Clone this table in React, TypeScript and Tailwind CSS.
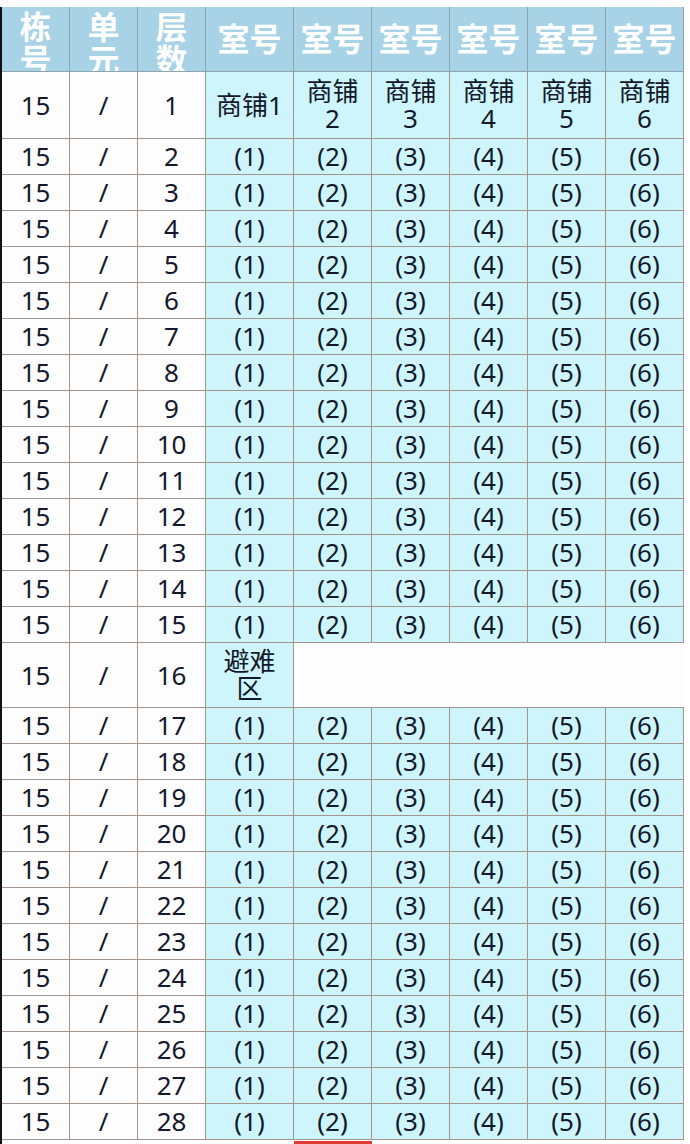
import React from 'react';

const COLS = 'grid-cols-[68px_68px_68px_88px_78px_78px_78px_78px_78px]';
const floors = Array.from({ length: 27 }, (_, i) => i + 2);

const Cell: React.FC<{ cyan?: boolean; className?: string; children?: React.ReactNode }> = ({ cyan, className = '', children }) => (
  <div
    className={`flex items-center justify-center text-center border-r border-b border-[#a3958b] ${
      cyan ? 'bg-[#cdf5fb]' : 'bg-[#fdfdfd]'
    } ${className}`}
  >
    {children}
  </div>
);

const Head: React.FC<{ vertical?: boolean; children: React.ReactNode }> = ({ vertical, children }) => (
  <div
    className={`flex justify-center overflow-hidden border-r border-b border-[#8fa3ad] bg-[#a8d2e6] text-white font-bold ${
      vertical ? 'items-start pt-[3px] leading-[33px] text-[32px]' : 'items-center text-[32px] leading-none'
    }`}
  >
    {vertical ? (
      <div className="flex flex-col items-center">
        {String(children).split('').map((c, i) => (
          <span key={i} className="block h-[33px]">
            {c}
          </span>
        ))}
      </div>
    ) : (
      children
    )}
  </div>
);

export default function App() {
  return (
    <div
      className="w-[690px] h-[1144px] bg-white pt-[7px] overflow-hidden text-[#14182a]"
      style={{ fontFamily: '"Noto Sans", "Noto Sans CJK SC", sans-serif' }}
    >
      <div className="border-l-2 border-[#111] w-[684px]">
        <div className={`grid ${COLS} h-[65px]`}>
          <Head vertical>栋号</Head>
          <Head vertical>单元</Head>
          <Head vertical>层数</Head>
          {[1, 2, 3, 4, 5, 6].map((n) => (
            <Head key={n}>室号</Head>
          ))}
        </div>

        <div className={`grid ${COLS} text-[26px]`}>
          {/* first floor: shops */}
          <Cell className="h-[67px]">15</Cell>
          <Cell className="h-[67px]">/</Cell>
          <Cell className="h-[67px]">1</Cell>
          <Cell cyan className="h-[67px]">商铺1</Cell>
          {[2, 3, 4, 5, 6].map((n) => (
            <Cell key={n} cyan className="h-[67px] leading-[27px]">
              <span>
                商铺
                <br />
                {n}
              </span>
            </Cell>
          ))}

          {floors.map((f) =>
            f === 16 ? (
              <React.Fragment key={f}>
                <Cell className="h-[65px]">15</Cell>
                <Cell className="h-[65px]">/</Cell>
                <Cell className="h-[65px]">16</Cell>
                <Cell cyan className="h-[65px] leading-[27px]">
                  <span>
                    避难
                    <br />区
                  </span>
                </Cell>
                <div className="col-span-5 h-[65px] bg-[#fdfdfd] border-b border-[#a3958b]" />
              </React.Fragment>
            ) : (
              <React.Fragment key={f}>
                <Cell className="h-[36px]">15</Cell>
                <Cell className="h-[36px]">/</Cell>
                <Cell className="h-[36px]">{f}</Cell>
                {[1, 2, 3, 4, 5, 6].map((n) => (
                  <Cell key={n} cyan className="h-[36px]">
                    ({n})
                  </Cell>
                ))}
              </React.Fragment>
            )
          )}
        </div>
        <div className={`grid ${COLS} h-[4px]`}>
          <div className="col-start-5 mt-[1px] h-[3px] bg-[#e23a35]" />
        </div>
      </div>
    </div>
  );
}
